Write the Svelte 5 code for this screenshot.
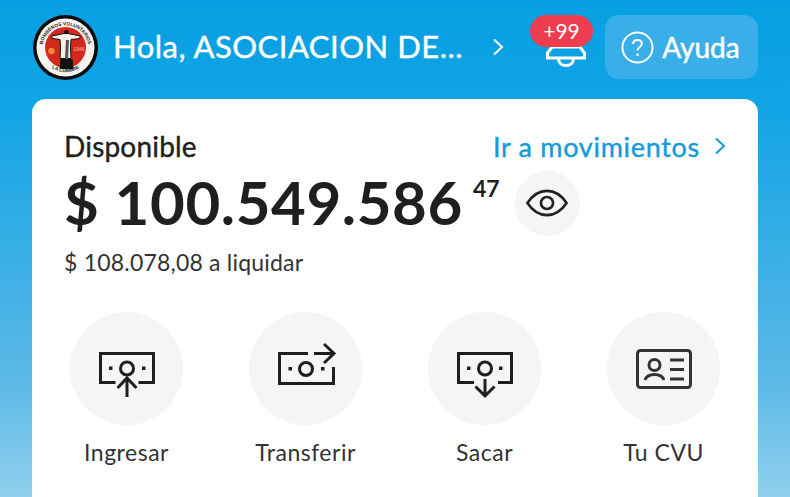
<script lang="ts">
  const actions = [
    { label: 'Ingresar', icon: 'in' },
    { label: 'Transferir', icon: 'send' },
    { label: 'Sacar', icon: 'out' },
    { label: 'Tu CVU', icon: 'id' }
  ];
</script>

<div class="screen">
  <header class="top">
    <svg class="logo" viewBox="0 0 65 65" aria-hidden="true">
      <defs>
        <path id="arcTop" d="M10.500 40a23 23 0 1 1 44 0" />
        <path id="arcBottom" d="M13 48a25.500 25.500 0 0 0 39 0" />
      </defs>
      <circle cx="32.500" cy="32.500" r="32.500" fill="#0b0b0b" />
      <circle cx="32.500" cy="32.500" r="29" fill="#f7f3ee" />
      <circle cx="32.500" cy="32.500" r="20.500" fill="#d5281c" />
      <text class="ring" font-size="4.800"><textPath href="#arcTop" startOffset="50%" text-anchor="middle">BOMBEROS VOLUNTARIOS</textPath></text>
      <text class="ring" font-size="4.800"><textPath href="#arcBottom" startOffset="50%" text-anchor="middle">LA CUMBRE</textPath></text>
      <path d="M19 21l12-2.500h4l12 2.500v2.500l-9 1-.5 7 .5 12h-11l.5-12-.5-7-8-1z" fill="#f4efe9" stroke="#111" stroke-width="1" />
      <circle cx="33.500" cy="17" r="2.200" fill="#111" />
      <path d="M33 25l3 0-1 19h-3z" fill="#555" />
      <path d="M27.500 44h12l1 10h-14z" fill="#111" />
      <circle cx="18.500" cy="36" r="3.200" fill="#f08a3c" />
      <text class="year" x="40.500" y="36" font-size="5">1946</text>
    </svg>
    <button class="greeting">
      <span class="name">Hola, ASOCIACION DE...</span>
      <svg class="chev" viewBox="0 0 12 18" aria-hidden="true"><path d="M2 1.500l8 7.500-8 7.500" /></svg>
    </button>
    <div class="bell">
      <svg viewBox="0 0 42 24" aria-hidden="true">
        <path d="M7 2H35L39.500 8V13H2.500V8zM13.500 13.500c0 4.500 3 7 7.500 7s7.500-2.500 7.500-7" />
      </svg>
      <span class="badge">+99</span>
    </div>
    <button class="help">
      <svg viewBox="0 0 34 34" aria-hidden="true">
        <circle cx="17" cy="17" r="15.500" />
        <path d="M12.500 13.500c0-2.700 2-4.300 4.500-4.300s4.500 1.500 4.500 3.800c0 3.500-4.500 3.500-4.500 7" />
        <circle class="dot" cx="17" cy="24.500" r="1.300" />
      </svg>
      <span>Ayuda</span>
    </button>
  </header>

  <section class="card">
    <div class="row-head">
      <span class="avail">Disponible</span>
      <a class="moves" href="#movimientos">
        Ir a movimientos
        <svg viewBox="0 0 12 18" aria-hidden="true"><path d="M2 1.500l8 7.500-8 7.500" /></svg>
      </a>
    </div>
    <div class="row-amount">
      <span class="amount">$ 100.549.586</span>
      <sup class="cents">47</sup>
      <span class="eye">
        <svg viewBox="0 0 46 30" aria-hidden="true">
          <path d="M2 15C8 6 15 2 23 2s15 4 21 13c-6 9-13 13-21 13S8 24 2 15z" />
          <circle cx="23" cy="15" r="6.500" />
        </svg>
      </span>
    </div>
    <p class="pending">$ 108.078,08 a liquidar</p>

    <div class="actions">
      {#each actions as a}
        <div class="action">
          <span class="disc">
            {#if a.icon === 'in'}
              <svg class="low" viewBox="0 0 56 46"><path d="M16.500 30.500H1.500V1.500h53V30.500H39.500" /><circle cx="28" cy="16.500" r="6.500" /><path class="fill" d="M10 14.500h3.500V18H10zM43 14.500h3.500V18H43z" /><path d="M28 45V26M18.500 36L28 26l9.500 10" /></svg>
            {:else if a.icon === 'send'}
              <svg class="high" viewBox="0 0 58 46"><path d="M30 11.500H1.500v30h54V25" /><circle cx="28" cy="27" r="6.500" /><path class="fill" d="M10.500 25H14v3.500h-3.500zM43 25h3.500v3.500H43z" /><path d="M36 11.500h20M46 2l10 9.500L46 21" /></svg>
            {:else if a.icon === 'out'}
              <svg class="low" viewBox="0 0 56 46"><path d="M17 30.500H1.500V1.500h53V30.500H41" /><circle cx="28" cy="16.500" r="6.500" /><path class="fill" d="M10 14.500h3.500V18H10zM42 14.500h3.500V18H42z" /><path d="M28 27v17M18.500 34.500L28 44l9.500-9.500" /></svg>
            {:else}
              <svg class="soft" viewBox="0 0 56 40"><rect x="1.500" y="1.500" width="53" height="37" rx="3" /><circle cx="18.500" cy="16" r="5.500" /><path d="M9 31c1.500-4 5-5.500 9.500-5.500s8 1.500 9.500 5.500M34 11h14M34 20.500h14M34 30h14" /></svg>
            {/if}
          </span>
          <span class="label">{a.label}</span>
        </div>
      {/each}
    </div>
  </section>
</div>

<style>
  :global(body) {
    margin: 0;
  }

  .screen {
    width: 790px;
    height: 497px;
    overflow: hidden;
    background: linear-gradient(180deg, #05a0e3 0%, #12a4e5 22%, #5ab8e6 76%, #90d0ed 100%);
    font-family: "Lato", "Open Sans", sans-serif;
    box-sizing: border-box;
    padding: 15px 32px 0 33px;
    display: flex;
    flex-direction: column;
    gap: 20px;
  }

  .top {
    height: 64px;
    display: flex;
    align-items: center;
  }

  .logo {
    width: 65px;
    height: 65px;
    flex-shrink: 0;
  }

  .ring {
    font-family: "Liberation Sans", sans-serif;
    font-weight: 700;
    fill: #1a1a1a;
  }

  .year {
    font-family: "Liberation Sans", sans-serif;
    fill: #f3b9a0;
  }

  .greeting {
    all: unset;
    margin-left: 15px;
    margin-top: -3px;
    display: flex;
    align-items: center;
    width: 391px;
    color: #fff;
  }

  .name {
    font-size: 31px;
    white-space: nowrap;
    flex: 1;
    letter-spacing: 0.5px;
    -webkit-text-stroke: 0.4px #fff;
  }

  .chev {
    width: 12px;
    height: 18px;
    fill: none;
    stroke: #fff;
    stroke-width: 2;
    margin-top: 3px;
  }

  .bell {
    position: relative;
    width: 42px;
    height: 64px;
    margin-left: 41px;
  }

  .bell svg {
    position: absolute;
    left: 0;
    top: 30px;
    width: 42px;
    height: 24px;
    fill: none;
    stroke: #fff;
    stroke-width: 3;
  }

  .badge {
    position: absolute;
    left: -15px;
    top: 0;
    width: 63px;
    height: 32px;
    border-radius: 16px;
    background: #ee3d50;
    color: #fff;
    font-size: 21px;
    line-height: 31px;
    text-align: center;
  }

  .help {
    all: unset;
    margin-left: 18px;
    width: 153px;
    height: 64px;
    box-sizing: border-box;
    padding-right: 2px;
    border-radius: 14px;
    background: #39afea;
    color: #fff;
    display: flex;
    align-items: center;
    justify-content: center;
    gap: 8px;
    font-size: 28px;
    -webkit-text-stroke: 0.5px #fff;
  }

  .help svg {
    width: 33px;
    height: 33px;
    fill: none;
    stroke: #fff;
    stroke-width: 2;
  }

  .help .dot {
    fill: #fff;
    stroke: none;
  }

  .card {
    flex: 1;
    margin-left: -1px;
    background: #fff;
    border-radius: 14px 14px 0 0;
    padding: 31px 32px 0 32px;
    color: #1f1f1f;
  }

  .row-head {
    display: flex;
    justify-content: space-between;
    align-items: center;
    height: 32px;
  }

  .avail {
    font-size: 28px;
    letter-spacing: 0.2px;
    -webkit-text-stroke: 0.4px #1f1f1f;
  }

  .moves {
    display: flex;
    align-items: center;
    gap: 14px;
    color: #139cd9;
    font-size: 27px;
    text-decoration: none;
    letter-spacing: 0.7px;
    -webkit-text-stroke: 0.4px #139cd9;
  }

  .moves svg {
    width: 12px;
    height: 18px;
    fill: none;
    stroke: #139cd9;
    stroke-width: 2;
  }

  .row-amount {
    display: flex;
    align-items: center;
    height: 72px;
    margin-top: 6px;
  }

  .amount {
    font-size: 60px;
    font-weight: 700;
    white-space: nowrap;
    letter-spacing: 0.6px;
    margin-top: -5px;
  }

  .cents {
    align-self: flex-start;
    margin: 6px 0 0 10px;
    font-size: 23px;
    font-weight: 700;
  }

  .eye {
    width: 65px;
    height: 65px;
    margin: -2px 0 0 15px;
    border-radius: 50%;
    background: #f5f5f5;
    display: flex;
    align-items: center;
    justify-content: center;
  }

  .eye svg {
    width: 44px;
    height: 28px;
    fill: none;
    stroke: #222;
    stroke-width: 2.800;
  }

  .pending {
    margin: 8px 0 0;
    font-size: 23px;
    letter-spacing: 0.2px;
    color: #333;
  }

  .actions {
    margin-top: 36px;
    display: grid;
    grid-template-columns: repeat(4, 113px);
    justify-content: space-between;
    padding: 0 6px;
  }

  .action {
    display: flex;
    flex-direction: column;
    align-items: center;
    gap: 13px;
  }

  .disc {
    width: 113px;
    height: 113px;
    border-radius: 50%;
    background: #f5f5f5;
    display: flex;
    align-items: center;
    justify-content: center;
  }

  .disc svg {
    width: 56px;
    height: 46px;
    fill: none;
    stroke: #1f1f1f;
    stroke-width: 3;
    overflow: visible;
  }

  .disc svg.high {
    width: 58px;
    margin: 0 0 7px 2px;
  }

  .disc svg.low {
    margin-top: 13px;
  }

  .disc svg.soft {
    height: 40px;
    stroke: #333;
  }

  .disc svg .fill {
    fill: #1f1f1f;
    stroke: none;
  }

  .label {
    font-size: 23px;
    color: #333;
    white-space: nowrap;
    letter-spacing: 0.5px;
  }
</style>
